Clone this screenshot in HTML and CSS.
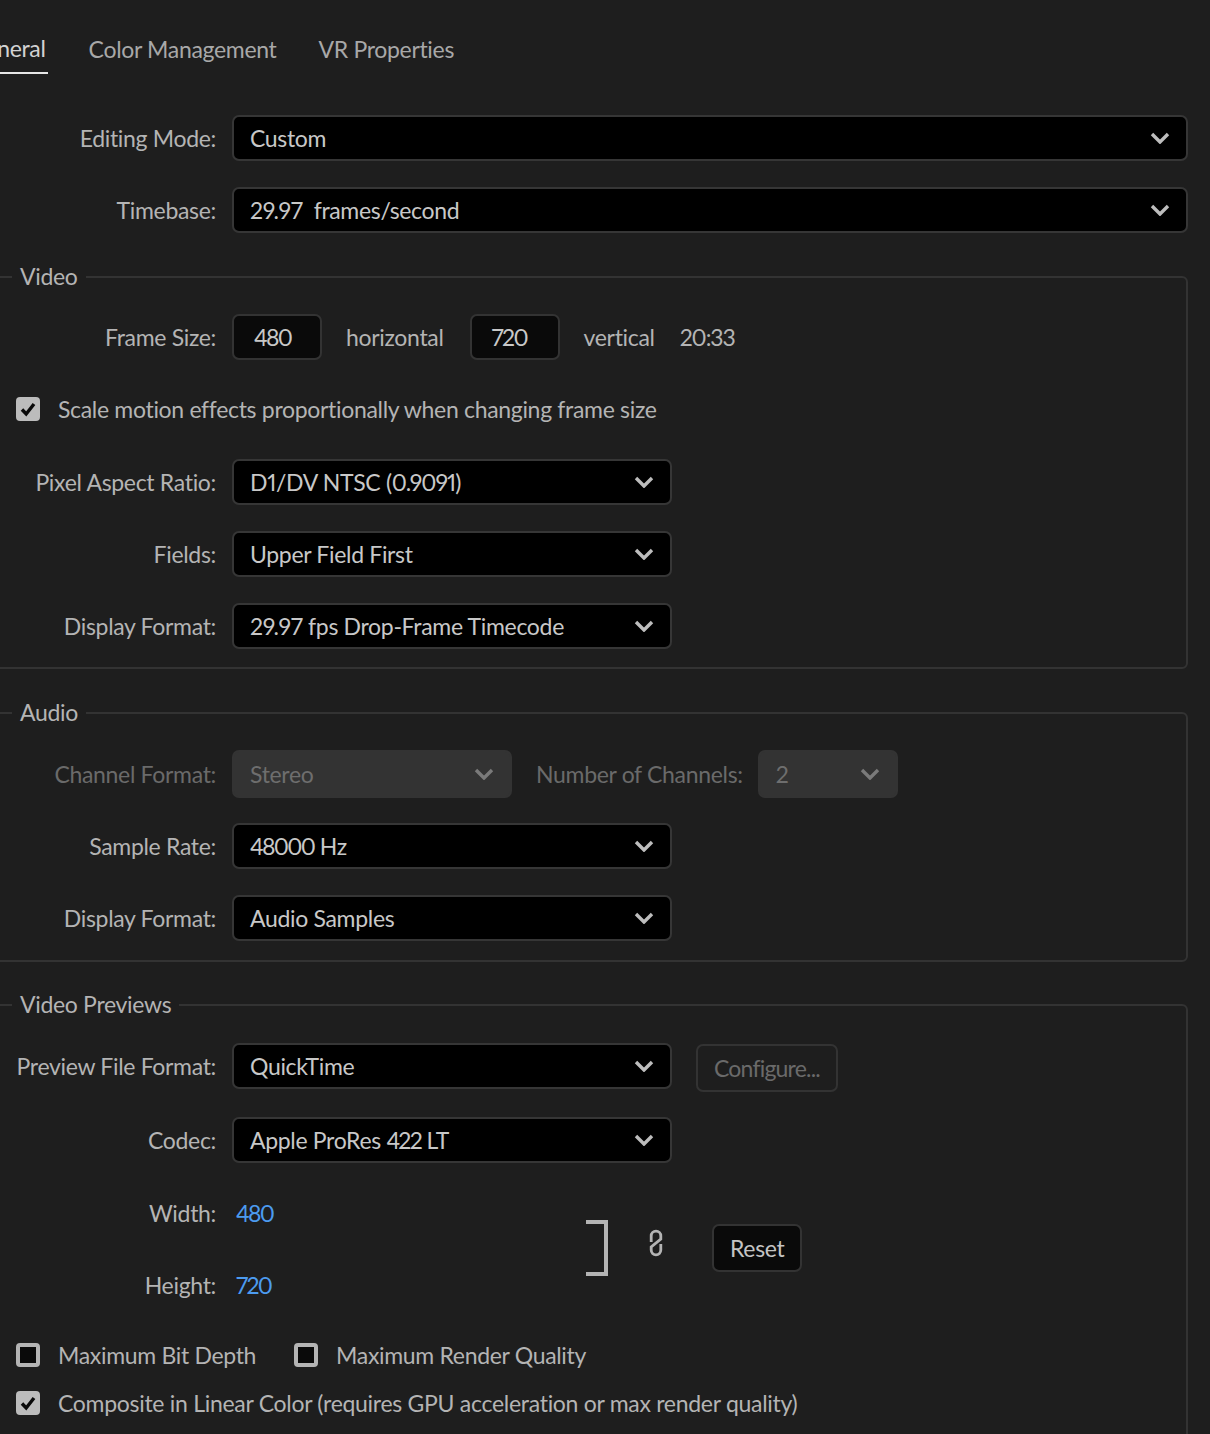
FILE: index.html
```html
<!DOCTYPE html>
<html lang="en">
<head>
<meta charset="utf-8">
<title>Sequence Settings</title>
<link rel="stylesheet" href="styles.css">
</head>
<body>
<svg class="defs" width="0" height="0" aria-hidden="true">
  <symbol id="chev" viewBox="0 0 20 12"><path d="M2 2l8 8 8-8" fill="none" stroke="currentColor" stroke-width="3.4"/></symbol>
  <symbol id="tick" viewBox="0 0 24 24"><path d="M6 12.5l4.2 4.5L18 7" fill="none" stroke="currentColor" stroke-width="3.4"/></symbol>
</svg>
<main class="page">
  <nav class="tabs">
    <span class="tab tab-active">General</span>
    <span class="tab tab-color">Color Management</span>
    <span class="tab">VR Properties</span>
  </nav>

  <div class="top-rows">
    <div class="row"><span class="label">Editing Mode:</span><div class="select select-full"><span>Custom</span><svg class="chev"><use href="#chev"/></svg></div></div>
    <div class="row"><span class="label">Timebase:</span><div class="select select-full"><span class="pre">29.97  frames/second</span><svg class="chev"><use href="#chev"/></svg></div></div>
  </div>

  <fieldset class="group group-video">
    <legend>Video</legend>
    <div class="row">
      <span class="label">Frame Size:</span>
      <div class="num"><span class="d">480</span></div><span class="unit">horizontal</span>
      <div class="num"><span class="d">720</span></div><span class="unit">vertical</span>
      <span class="ratio">20:33</span>
    </div>
    <div class="check-row check-row-scale">
      <span class="check check-on"><svg class="tick"><use href="#tick"/></svg></span>
      <span>Scale motion effects proportionally when changing frame size</span>
    </div>
    <div class="row"><span class="label">Pixel Aspect Ratio:</span><div class="select"><span>D1/DV NTSC (<span class="d2">0.9091</span>)</span><svg class="chev"><use href="#chev"/></svg></div></div>
    <div class="row"><span class="label">Fields:</span><div class="select"><span>Upper Field First</span><svg class="chev"><use href="#chev"/></svg></div></div>
    <div class="row"><span class="label">Display Format:</span><div class="select"><span>29.97 fps Drop-Frame Timecode</span><svg class="chev"><use href="#chev"/></svg></div></div>
  </fieldset>

  <fieldset class="group group-audio">
    <legend>Audio</legend>
    <div class="row row-disabled">
      <span class="label">Channel Format:</span>
      <div class="select select-off select-stereo"><span>Stereo</span><svg class="chev"><use href="#chev"/></svg></div>
      <span class="label-inline">Number of Channels:</span>
      <div class="select select-off select-channels"><span>2</span><svg class="chev"><use href="#chev"/></svg></div>
    </div>
    <div class="row"><span class="label">Sample Rate:</span><div class="select"><span><span class="d">48000</span> Hz</span><svg class="chev"><use href="#chev"/></svg></div></div>
    <div class="row"><span class="label">Display Format:</span><div class="select"><span>Audio Samples</span><svg class="chev"><use href="#chev"/></svg></div></div>
  </fieldset>

  <fieldset class="group group-previews">
    <legend>Video Previews</legend>
    <div class="row row-format">
      <span class="label">Preview File Format:</span>
      <div class="select"><span>QuickTime</span><svg class="chev"><use href="#chev"/></svg></div>
      <div class="btn btn-off">Configure...</div>
    </div>
    <div class="row row-codec"><span class="label">Codec:</span><div class="select"><span>Apple ProRes <span class="d">422</span> LT</span><svg class="chev"><use href="#chev"/></svg></div></div>
    <div class="dims">
      <div class="dims-fields">
        <div class="row"><span class="label">Width:</span><span class="value d">480</span></div>
        <div class="row"><span class="label">Height:</span><span class="value d">720</span></div>
      </div>
      <span class="bracket"></span>
      <svg class="link" viewBox="0 0 14 28"><path d="M2.2 13V7a4.8 4.8 0 0 1 9.6 0v3L2.2 18v3a4.8 4.8 0 0 0 9.6 0v-6" fill="none" stroke="currentColor" stroke-width="2.8"/></svg>
      <div class="btn btn-reset">Reset</div>
    </div>
    <div class="check-row check-row-bits">
      <span class="check"></span><span>Maximum Bit Depth</span>
      <span class="check check-second"></span><span>Maximum Render Quality</span>
    </div>
    <div class="check-row check-row-linear">
      <span class="check check-on"><svg class="tick"><use href="#tick"/></svg></span>
      <span>Composite in Linear Color (requires GPU acceleration or max render quality)</span>
    </div>
  </fieldset>
</main>
</body>
</html>
```
FILE: styles.css
```css
* { box-sizing: border-box; }
html, body { margin: 0; height: 1434px; overflow: hidden; background: #1e1e1e; }
body { font-family: Lato, "Noto Sans", sans-serif; font-size: 23px; letter-spacing: -0.32px; font-variant-numeric: proportional-nums; color: #b4b4b4; }
.defs { display: block; height: 0; }
.page { width: 1210px; height: 1434px; overflow: hidden; }
.d { letter-spacing: -1.7px; }
.d2 { letter-spacing: -1px; }

.tabs { display: flex; height: 74px; margin-left: -31px; }
.tab { display: flex; align-items: center; height: 74px; padding-top: 24px; padding-right: 2px; margin-right: 41px; color: #a8a8a8; }
.tab-active { color: #d2d2d2; border-bottom: 2px solid #e6e6e6; }
.tab-color { margin-right: 40px; }

.top-rows { display: flex; flex-direction: column; gap: 26px; padding-top: 41px; }
.row { display: flex; align-items: center; height: 46px; }
.label { width: 216px; margin-right: 16px; flex: none; text-align: right; color: #b4b4b4; }

.select { display: flex; align-items: center; justify-content: space-between; width: 440px; height: 46px; padding: 0 16px 0 16px; background: #000; border: 2px solid #363636; border-radius: 7px; color: #c8c8c8; flex: none; }
.select-full { width: 956px; }
.pre { white-space: pre; }
.chev { width: 20px; height: 12px; flex: none; color: #bdbdbd; }
.select-off { background: #333; border-color: #333; color: #6e6e6e; height: 48px; }
.select-off .chev { color: #7a7a7a; }
.select-stereo { width: 280px; }
.select-channels { width: 140px; }
.label-inline { margin: 0 15px 0 24px; color: #6a6a6a; }
.row-disabled { height: 48px; }
.row-disabled .label { color: #6a6a6a; }

.group { margin: 29px 0 0 -8px; padding: 22px 0 18px 6px; width: 1196px; border: 2px solid #333; border-radius: 6px; min-width: 0; }
.group legend { margin-left: 12px; padding: 0 8px 2px; line-height: 28px; height: 30px; color: #b4b4b4; }
.group-audio { margin-top: 29px; padding-top: 22px; padding-bottom: 19px; }
.group-previews { margin-top: 28px; padding-top: 23px; padding-bottom: 200px; }
.group > .row + .row { margin-top: 26px; }
.group > .row-disabled + .row { margin-top: 25px; }
.group > .row-format + .row-codec { margin-top: 28px; }

.num { width: 90px; height: 46px; padding-left: 20px; display: flex; align-items: center; background: #0a0a0a; border: 2px solid #333; border-radius: 7px; color: #c8c8c8; flex: none; }
.unit { margin: 0 26px 0 24px; }
.ratio { margin-left: -1px; letter-spacing: -1.1px; }

.check-row { display: flex; align-items: center; height: 24px; padding-left: 16px; color: #b4b4b4; }
.check-row-scale { margin: 37px 0 38px; }
.check-row-bits { margin-top: 35px; }
.check-row-linear { margin-top: 24px; letter-spacing: -0.29px; }
.check { width: 24px; height: 24px; margin-right: 18px; border: 4px solid #b4b4b4; border-radius: 4px; background: #0a0a0a; flex: none; }
.check-on { border: 0; background: #bcbcbc; color: #0a0a0a; }
.check-second { margin-left: 38px; }
.tick { display: block; width: 24px; height: 24px; }

.btn { display: flex; align-items: center; height: 48px; border: 2px solid #333; border-radius: 7px; }
.btn-off { margin: 4px 0 0 24px; padding-left: 16px; width: 142px; letter-spacing: -0.8px; color: #6a6a6a; }
.btn-reset { width: 90px; padding-left: 16px; margin: -3px 0 0 49px; background: #0a0a0a; color: #c4c4c4; }

.dims { display: flex; align-items: center; margin-top: 27px; height: 118px; }
.dims-fields { display: flex; flex-direction: column; gap: 26px; width: 586px; flex: none; }
.value { margin-left: 4px; color: #4c9bf0; }
.bracket { width: 22px; height: 56px; margin-top: -3px; border: 4px solid #b4b4b4; border-left: 0; flex: none; }
.link { width: 14px; height: 28px; margin: -12px 0 0 41px; color: #b4b4b4; flex: none; }
```
